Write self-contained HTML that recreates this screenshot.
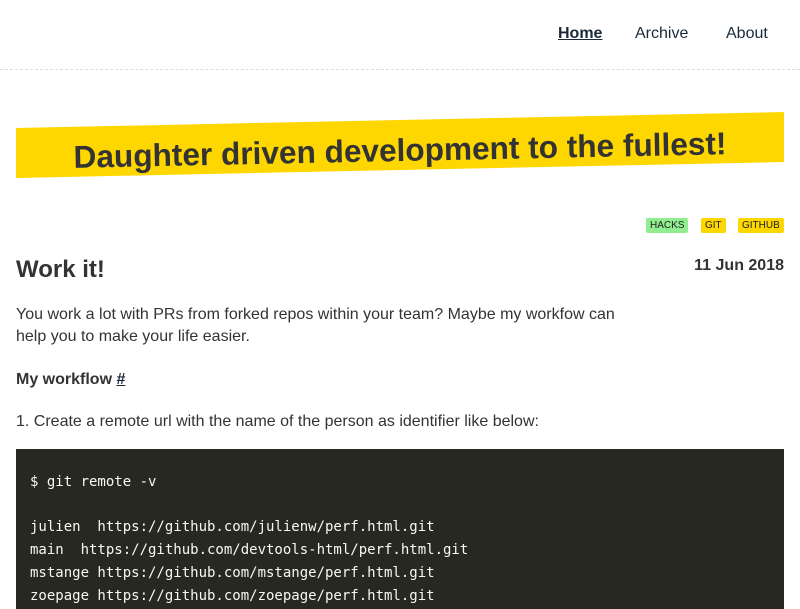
<!DOCTYPE html>
<html><head><meta charset="utf-8"><style>
body{margin:0;background:#fff;font-family:"Liberation Sans",sans-serif;color:#333;width:800px;height:600px;overflow:hidden;position:relative}
.nav{position:absolute;top:0;left:0;width:800px;height:69px;border-bottom:1px dashed #ddd}
.nav a{position:absolute;top:25px;font-size:16px;color:#1a2a3a;text-decoration:none}
.banner{position:absolute;left:16px;top:112px;width:768px;height:66px}
.banner svg{position:absolute;left:0;top:0}
.btxt{position:absolute;left:0;width:768px;top:131px;text-align:center;font-weight:bold;font-size:31.6px;color:#333;transform:rotate(-1.2deg);transform-origin:center;line-height:38px}
.tag{position:absolute;top:218px;height:15px;font-size:10px;line-height:15px;padding:0 4px;border-radius:2px;color:#222}
p{position:absolute;left:16px;margin:0;font-size:16px;line-height:22px}
pre{position:absolute;left:16px;top:449px;width:768px;height:160px;margin:0;background:#272822;color:#f8f8f2;font-family:"DejaVu Sans Mono",monospace;font-size:14px;line-height:22.7px;padding:22px 14px;box-sizing:border-box}
</style></head><body>
<div class="nav">
<a style="left:558px;font-weight:bold;text-decoration:underline">Home</a>
<a style="left:635px">Archive</a>
<a style="left:726px">About</a>
</div>
<div class="banner"><svg width="768" height="66"><polygon points="0,16 768,0 768,50 0,66" fill="#ffd700"/></svg></div>
<div class="btxt" style="left:16px">Daughter driven development to the fullest!</div>
<span class="tag" style="left:646px;background:#90ee90">HACKS</span>
<span class="tag" style="left:701px;background:#ffd700">GIT</span>
<span class="tag" style="left:738px;background:#ffd700">GITHUB</span>
<div style="position:absolute;left:16px;top:256px;font-size:24px;font-weight:bold">Work it!</div>
<div style="position:absolute;right:16px;top:257px;font-size:16px;font-weight:bold">11 Jun 2018</div>
<p style="top:304px;width:620px">You work a lot with PRs from forked repos within your team? Maybe my workfow can help you to make your life easier.</p>
<p style="top:369px;font-weight:bold">My workflow <a style="color:#1a2a3a;text-decoration:underline">#</a></p>
<p style="top:411px">1. Create a remote url with the name of the person as identifier like below:</p>
<pre>$ git remote -v

julien  https://github.com/julienw/perf.html.git
main  https://github.com/devtools-html/perf.html.git
mstange https://github.com/mstange/perf.html.git
zoepage https://github.com/zoepage/perf.html.git</pre>
</body></html>
